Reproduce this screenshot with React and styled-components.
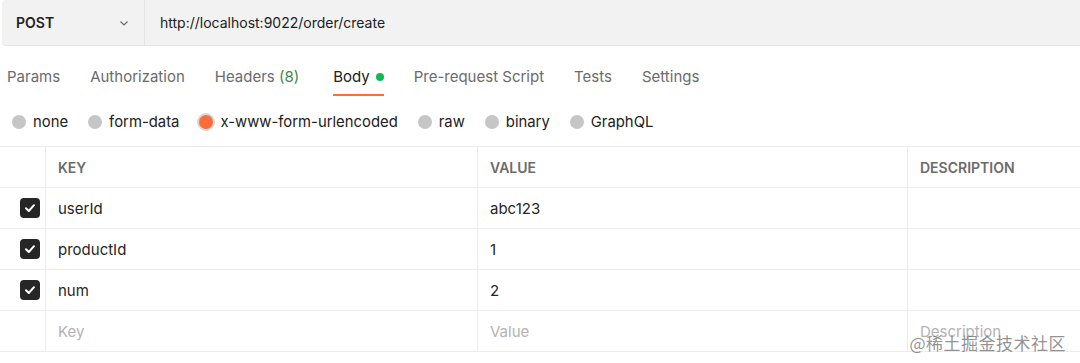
import React from "react";
import styled, { createGlobalStyle } from "styled-components";

const GlobalStyle = createGlobalStyle`
  html, body {
    margin: 0;
    padding: 0;
    background: #ffffff;
    font-family: Inter, "Open Sans", "Noto Sans CJK SC", sans-serif;
  }
  * {
    box-sizing: border-box;
  }
`;

const Page = styled.div`
  width: 1080px;
  height: 363px;
  overflow: hidden;
  position: relative;
  background: #fff;
`;

const UrlBar = styled.div`
  display: flex;
  height: 46px;
  margin-left: 2px;
  background: #f2f2f2;
  border-radius: 4px 0 0 4px;
  border-bottom: 1px solid #e6e6e6;
`;

const MethodBox = styled.div`
  width: 143px;
  display: flex;
  align-items: center;
  justify-content: space-between;
  padding: 0 14px 0 14px;
  border-right: 1px solid #e4e4e4;
  font-size: 14px;
  font-weight: 600;
  color: #212121;
`;

const UrlText = styled.div`
  display: flex;
  align-items: center;
  padding-left: 15px;
  font-size: 14px;
  color: #212121;
`;

const Tabs = styled.div`
  display: flex;
  height: 52px;
  padding-left: 7px;
  gap: 30px;
  align-items: flex-start;
`;

const Tab = styled.div`
  position: relative;
  padding-top: 21px;
  height: 50px;
  font-size: 15px;
  margin-left: ${(p) => (p.active ? "4px" : "0")};
  color: ${(p) => (p.active ? "#212121" : "#6b6b6b")};
  display: flex;
  align-items: flex-start;
  gap: 6px;
  border-bottom: 2px solid ${(p) => (p.active ? "#ff6c37" : "transparent")};
`;

const Count = styled.span`
  color: #3a8a4a;
`;

const Dot = styled.span`
  width: 8px;
  height: 8px;
  border-radius: 50%;
  background: #0cbb52;
  margin-top: 6px;
`;

const Radios = styled.div`
  display: flex;
  align-items: center;
  height: 48px;
  padding-left: 12px;
  gap: 20px;
`;

const RadioItem = styled.label`
  display: flex;
  align-items: center;
  gap: 7px;
  font-size: 14.85px;
  color: #212121;
`;

const Circle = styled.span`
  width: 14px;
  height: 14px;
  border-radius: 50%;
  background: ${(p) => (p.checked ? "#ff6c37" : "#c6c6c6")};
  box-shadow: ${(p) => (p.checked ? "0 0 0 2px #d8d8d8" : "none")};
`;

const Table = styled.div`
  border-top: 1px solid #ececec;
  display: grid;
  grid-template-columns: 46px 432px 430px 1fr;
`;

const Cell = styled.div`
  height: 41px;
  display: flex;
  align-items: center;
  padding-left: ${(p) => (p.check ? "0" : "12px")};
  justify-content: ${(p) => (p.check ? "flex-end" : "flex-start")};
  padding-right: ${(p) => (p.check ? "5px" : "0")};
  border-bottom: 1px solid #ececec;
  border-right: ${(p) => (p.last ? "none" : "1px solid #ececec")};
  font-size: 15px;
  color: ${(p) => (p.placeholder ? "#b3b3b3" : "#262626")};
`;

const HeadCell = styled(Cell)`
  font-size: 14px;
  font-weight: 600;
  color: #6b6b6b;
`;

const CheckBox = styled.span`
  width: 20px;
  height: 20px;
  border-radius: 4px;
  background: #262626;
  display: flex;
  align-items: center;
  justify-content: center;
`;

const Watermark = styled.div`
  position: absolute;
  right: 14px;
  bottom: 8px;
  font-size: 17px;
  color: rgba(110, 110, 110, 0.75);
  font-family: "Noto Sans CJK SC", sans-serif;
  letter-spacing: 0.5px;
`;

const Chevron = () => (
  <svg width="12" height="12" viewBox="0 0 12 12" fill="none">
    <path d="M2.5 4.5 6 8l3.5-3.5" stroke="#6b6b6b" strokeWidth="1.2" />
  </svg>
);

const Tick = () => (
  <svg width="14" height="14" viewBox="0 0 14 14" fill="none">
    <path
      d="M3 7.3 5.8 10 11 4.2"
      stroke="#fff"
      strokeWidth="2"
      strokeLinecap="round"
      strokeLinejoin="round"
    />
  </svg>
);

const rows = [
  { key: "userId", value: "abc123" },
  { key: "productId", value: "1" },
  { key: "num", value: "2" },
];

const radios = ["none", "form-data", "x-www-form-urlencoded", "raw", "binary", "GraphQL"];

export default function App() {
  return (
    <Page>
      <GlobalStyle />
      <UrlBar>
        <MethodBox>
          POST
          <Chevron />
        </MethodBox>
        <UrlText>http://localhost:9022/order/create</UrlText>
      </UrlBar>
      <Tabs>
        <Tab>Params</Tab>
        <Tab>Authorization</Tab>
        <Tab>
          <span>
            Headers <Count>(8)</Count>
          </span>
        </Tab>
        <Tab active>
          Body
          <Dot />
        </Tab>
        <Tab>Pre-request Script</Tab>
        <Tab>Tests</Tab>
        <Tab>Settings</Tab>
      </Tabs>
      <Radios>
        {radios.map((r) => (
          <RadioItem key={r}>
            <Circle checked={r === "x-www-form-urlencoded"} />
            {r}
          </RadioItem>
        ))}
      </Radios>
      <Table>
        <HeadCell />
        <HeadCell>KEY</HeadCell>
        <HeadCell>VALUE</HeadCell>
        <HeadCell last>DESCRIPTION</HeadCell>
        {rows.map((r) => (
          <React.Fragment key={r.key}>
            <Cell check>
              <CheckBox>
                <Tick />
              </CheckBox>
            </Cell>
            <Cell>{r.key}</Cell>
            <Cell>{r.value}</Cell>
            <Cell last />
          </React.Fragment>
        ))}
        <Cell check />
        <Cell placeholder>Key</Cell>
        <Cell placeholder>Value</Cell>
        <Cell placeholder last>
          Description
        </Cell>
      </Table>
      <Watermark>@稀土掘金技术社区</Watermark>
    </Page>
  );
}
